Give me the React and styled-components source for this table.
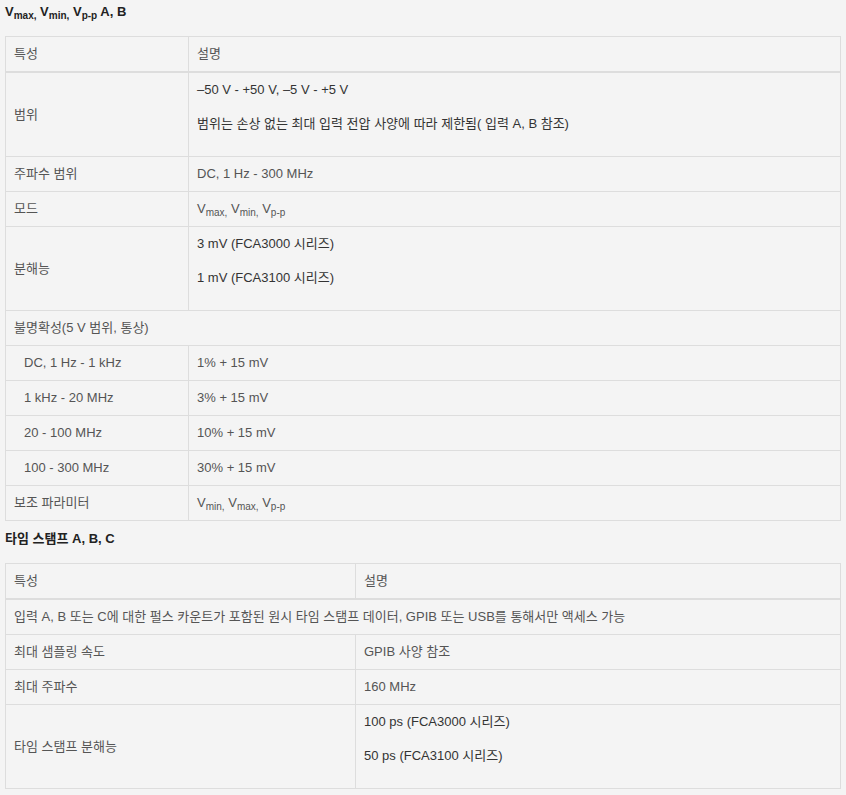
import React from "react";
import styled, { createGlobalStyle } from "styled-components";

const GlobalStyle = createGlobalStyle`
  body {
    margin: 0;
    background: #f4f4f4;
    font-family: "Liberation Sans", Arial, "Noto Sans CJK KR", sans-serif;
    font-size: 13px;
    color: #555;
  }
`;

const Page = styled.div`
  padding: 2px 5px 6px;
  display: flex;
  flex-direction: column;
  gap: 8px;
`;

const Heading = styled.h4`
  margin: 0 0 15px;
  font-size: 13px;
  line-height: 19px;
  font-weight: bold;
  color: #222;
`;

const Table = styled.table`
  width: 100%;
  border-collapse: collapse;
  border: 1px solid #ddd;
  table-layout: fixed;
  th,
  td {
    border: 1px solid #ddd;
    padding: 8px;
    line-height: 18px;
    text-align: left;
    vertical-align: middle;
  }
  th {
    font-weight: normal;
    border-bottom: 2px solid #ddd;
  }
`;

const KeyCol = styled.col`
  width: ${(p) => p.$w}px;
`;

const Cell = styled.td`
  && {
    padding-left: ${(p) => (p.$indent ? 18 : 8)}px;
  }
`;

const Para = styled.p`
  margin: 0 0 15px;
  line-height: 18.5px;
  color: #333;
`;

const Sub = styled.sub`
  font-size: 10px;
  vertical-align: -3px;
  line-height: 0;
`;

const V = ({ s }) => (
  <>
    V<Sub>{s}</Sub>
  </>
);

const uncertainty = [
  ["DC, 1 Hz - 1 kHz", "1% + 15 mV"],
  ["1 kHz - 20 MHz", "3% + 15 mV"],
  ["20 - 100 MHz", "10% + 15 mV"],
  ["100 - 300 MHz", "30% + 15 mV"],
];

export default function App() {
  return (
    <>
      <GlobalStyle />
      <Page>
        <section>
          <Heading>
            <V s="max," /> <V s="min," /> <V s="p-p" /> A, B
          </Heading>
          <Table>
            <colgroup>
              <KeyCol $w={183} />
              <col />
            </colgroup>
            <thead>
              <tr>
                <th>특성</th>
                <th>설명</th>
              </tr>
            </thead>
            <tbody>
              <tr>
                <td>범위</td>
                <td>
                  <Para>–50 V - +50 V, –5 V - +5 V</Para>
                  <Para>범위는 손상 없는 최대 입력 전압 사양에 따라 제한됨( 입력 A, B 참조)</Para>
                </td>
              </tr>
              <tr>
                <td>주파수 범위</td>
                <td>DC, 1 Hz - 300 MHz</td>
              </tr>
              <tr>
                <td>모드</td>
                <td>
                  <V s="max," /> <V s="min," /> <V s="p-p" />
                </td>
              </tr>
              <tr>
                <td>분해능</td>
                <td>
                  <Para>3 mV (FCA3000 시리즈)</Para>
                  <Para>1 mV (FCA3100 시리즈)</Para>
                </td>
              </tr>
              <tr>
                <td colSpan={2}>불명확성(5 V 범위, 통상)</td>
              </tr>
              {uncertainty.map(([k, v]) => (
                <tr key={k}>
                  <Cell $indent>{k}</Cell>
                  <td>{v}</td>
                </tr>
              ))}
              <tr>
                <td>보조 파라미터</td>
                <td>
                  <V s="min," /> <V s="max," /> <V s="p-p" />
                </td>
              </tr>
            </tbody>
          </Table>
        </section>
        <section>
          <Heading>타임 스탬프 A, B, C</Heading>
          <Table>
            <colgroup>
              <KeyCol $w={350} />
              <col />
            </colgroup>
            <thead>
              <tr>
                <th>특성</th>
                <th>설명</th>
              </tr>
            </thead>
            <tbody>
              <tr>
                <td colSpan={2}>
                  입력 A, B 또는 C에 대한 펄스 카운트가 포함된 원시 타임 스탬프 데이터, GPIB 또는 USB를 통해서만 액세스 가능
                </td>
              </tr>
              <tr>
                <td>최대 샘플링 속도</td>
                <td>GPIB 사양 참조</td>
              </tr>
              <tr>
                <td>최대 주파수</td>
                <td>160 MHz</td>
              </tr>
              <tr>
                <td>타임 스탬프 분해능</td>
                <td>
                  <Para>100 ps (FCA3000 시리즈)</Para>
                  <Para>50 ps (FCA3100 시리즈)</Para>
                </td>
              </tr>
            </tbody>
          </Table>
        </section>
      </Page>
    </>
  );
}
